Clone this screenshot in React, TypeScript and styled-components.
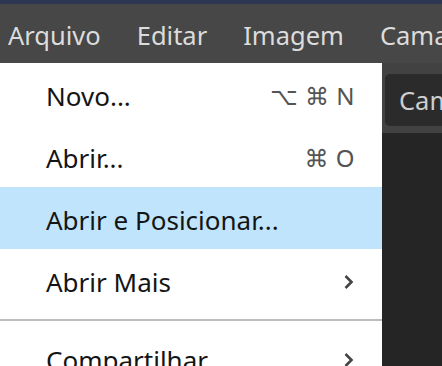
import React from "react";
import styled, { createGlobalStyle } from "styled-components";

const Global = createGlobalStyle`
  html, body { margin: 0; padding: 0; background: #252525; overflow: hidden; }
  body { font-family: "Noto Sans", "Open Sans", "DejaVu Sans", sans-serif; }
`;

const Window = styled.div`
  width: 442px;
  height: 366px;
  display: flex;
  flex-direction: column;
  overflow: hidden;
`;

const TitleStrip = styled.div`
  height: 4px;
  background: #2e3752;
  flex: none;
`;

const MenuBar = styled.div`
  height: 59px;
  flex: none;
  background: #474747;
  display: flex;
  align-items: center;
  gap: 36px;
  padding-left: 8px;
  white-space: nowrap;
`;

const MenuTitle = styled.div`
  font-size: 25.5px;
  color: #dcdcdc;
  padding-top: 3px;
`;

const Workspace = styled.div`
  position: relative;
  flex: 1;
  display: flex;
  flex-direction: column;
  background: #252525;
`;

const TabBar = styled.div`
  height: 70px;
  flex: none;
  background: #424242;
  display: flex;
  align-items: flex-start;
  padding: 11px 0 0 385px;
  box-sizing: border-box;
`;

const Tab = styled.div`
  height: 52px;
  flex: 1;
  background: #2b2b2b;
  border-radius: 5px 0 0 5px;
  display: flex;
  align-items: center;
  padding-left: 14px;
  font-size: 25.5px;
  color: #cfcfcf;
  white-space: nowrap;
  overflow: hidden;
`;

const Canvas = styled.div`
  flex: 1;
  background: #252525;
`;

const Dropdown = styled.div`
  position: absolute;
  left: 0;
  top: 0;
  width: 382px;
  background: #ffffff;
  display: flex;
  flex-direction: column;
`;

const Item = styled.div<{ $active?: boolean }>`
  height: 62px;
  display: flex;
  align-items: center;
  justify-content: space-between;
  padding: 3px 27px 0 46px;
  box-sizing: border-box;
  background: ${(p) => (p.$active ? "#bfe4fc" : "transparent")};
  font-size: 26px;
  color: #141414;
  white-space: nowrap;
`;

const Shortcut = styled.span`
  font-size: 24px;
  color: #545454;
  letter-spacing: 0.5px;
`;

const Separator = styled.div`
  height: 2px;
  background: #bdbdbd;
  margin: 8px 0 6px;
`;

const Chevron = () => (
  <svg width="13" height="18" viewBox="0 0 13 18">
    <path d="M3.5 3 L9.5 9 L3.5 15" fill="none" stroke="#444" strokeWidth="2.6" />
  </svg>
);

export default function App() {
  return (
    <Window>
      <Global />
      <TitleStrip />
      <MenuBar>
        <MenuTitle>Arquivo</MenuTitle>
        <MenuTitle>Editar</MenuTitle>
        <MenuTitle>Imagem</MenuTitle>
        <MenuTitle>Camada</MenuTitle>
      </MenuBar>
      <Workspace>
        <TabBar>
          <Tab>Camada</Tab>
        </TabBar>
        <Canvas />
        <Dropdown>
          <Item>
            <span>Novo...</span>
            <Shortcut>⌥ ⌘ N</Shortcut>
          </Item>
          <Item>
            <span>Abrir...</span>
            <Shortcut>⌘ O</Shortcut>
          </Item>
          <Item $active>
            <span>Abrir e Posicionar...</span>
          </Item>
          <Item>
            <span>Abrir Mais</span>
            <Chevron />
          </Item>
          <Separator />
          <Item>
            <span>Compartilhar</span>
            <Chevron />
          </Item>
        </Dropdown>
      </Workspace>
    </Window>
  );
}
